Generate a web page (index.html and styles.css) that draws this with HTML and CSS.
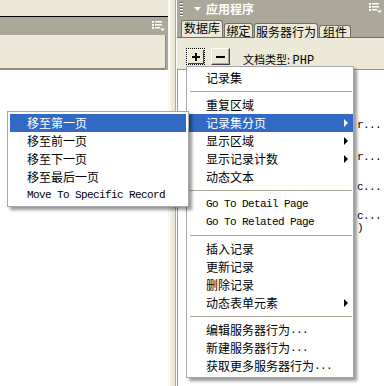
FILE: index.html
```html
<!DOCTYPE html>
<html lang="zh-CN">
<head>
    <meta charset="UTF-8">
    <meta name="viewport" content="width=device-width, initial-scale=1.0">
    <title>服务器行为</title>
    <link rel="stylesheet" href="styles.css">
</head>
<body>
    <div class="workspace">
        <section class="doc-panel">
            <div class="doc-top"></div>
            <div class="doc-head">
                <svg class="options-icon" width="13" height="10" viewBox="0 0 13 10">
                    <g fill="#fff">
                        <rect x="0" y="0" width="2" height="2"/><rect x="3" y="0" width="7" height="1.5"/>
                        <rect x="0" y="3" width="2" height="2"/><rect x="3" y="3" width="7" height="1.5"/>
                        <rect x="0" y="6" width="2" height="2"/><rect x="3" y="6" width="5" height="1.5"/>
                        <polygon points="8,7.5 13,7.5 10.5,10"/>
                    </g>
                </svg>
            </div>
            <div class="doc-bar"></div>
            <div class="doc-body"></div>
        </section>

        <div class="splitter"></div>

        <section class="app-panel">
            <header class="panel-head">
                <span class="gripper"></span>
                <svg class="collapse" width="7" height="4" viewBox="0 0 7 4"><polygon points="0,0 7,0 3.5,4" fill="#fff"/></svg>
                <span class="panel-title">应用程序</span>
                <svg class="options-icon" width="13" height="10" viewBox="0 0 13 10">
                    <g fill="#fff">
                        <rect x="0" y="0" width="2" height="2"/><rect x="3" y="0" width="7" height="1.5"/>
                        <rect x="0" y="3" width="2" height="2"/><rect x="3" y="3" width="7" height="1.5"/>
                        <rect x="0" y="6" width="2" height="2"/><rect x="3" y="6" width="5" height="1.5"/>
                        <polygon points="8,7.5 13,7.5 10.5,10"/>
                    </g>
                </svg>
            </header>

            <nav class="tabs">
                <span class="tab tab-db">数据库</span>
                <span class="tab tab-bind">绑定</span>
                <span class="tab tab-active">服务器行为</span>
                <span class="tab tab-comp">组件</span>
            </nav>

            <div class="toolbar">
                <button class="tool-btn focused">
                    <svg width="8" height="8" viewBox="0 0 8 8"><path d="M3 0h2v3h3v2H5v3H3V5H0V3h3z" fill="#000"/></svg>
                </button>
                <button class="tool-btn">
                    <svg width="9" height="2" viewBox="0 0 9 2"><rect width="9" height="2" fill="#000"/></svg>
                </button>
                <span class="doc-type">文档类型: <span class="doc-lang">PHP</span></span>
            </div>

            <div class="tree">
                <div class="frag">r...</div>
                <div class="frag gap-a">r...</div>
                <div class="frag gap-b">c...</div>
                <div class="frag gap-c">c...</div>
                <div class="frag">)</div>
            </div>
        </section>
    </div>

    <ul class="menu main-menu">
        <li class="item">记录集</li>
        <li class="sep"></li>
        <li class="item">重复区域</li>
        <li class="item active">记录集分页<span class="arrow"></span></li>
        <li class="item">显示区域<span class="arrow"></span></li>
        <li class="item">显示记录计数<span class="arrow"></span></li>
        <li class="item">动态文本</li>
        <li class="sep"></li>
        <li class="item mono">Go To Detail Page</li>
        <li class="item mono">Go To Related Page</li>
        <li class="sep"></li>
        <li class="item">插入记录</li>
        <li class="item">更新记录</li>
        <li class="item">删除记录</li>
        <li class="item">动态表单元素<span class="arrow"></span></li>
        <li class="sep"></li>
        <li class="item">编辑服务器行为<span class="mono">...</span></li>
        <li class="item">新建服务器行为<span class="mono">...</span></li>
        <li class="item">获取更多服务器行为<span class="mono">...</span></li>
    </ul>

    <ul class="menu sub-menu">
        <li class="item active">移至第一页</li>
        <li class="item">移至前一页</li>
        <li class="item">移至下一页</li>
        <li class="item">移至最后一页</li>
        <li class="item mono">Move To Specific Record</li>
    </ul>
</body>
</html>
```

FILE: styles.css
```css
* {
    box-sizing: border-box;
}

html, body {
    margin: 0;
    padding: 0;
    height: 100%;
}

body {
    font-family: "Noto Sans CJK SC", sans-serif;
    font-size: 12px;
    color: #000;
    background: #fff;
    overflow: hidden;
}

.mono {
    font-family: "Liberation Mono", monospace;
    font-size: 11px;
    letter-spacing: -0.6px;
}

.workspace {
    display: flex;
    height: 386px;
}

/* left document panel */
.doc-panel {
    width: 168px;
    display: flex;
    flex-direction: column;
    background: #aca899;
}

.doc-top {
    height: 17px;
    background: #ece9d8;
    border-bottom: 1px solid #000;
}

.doc-head {
    height: 18px;
    display: flex;
    align-items: center;
    justify-content: flex-end;
    padding-right: 3px;
}

.doc-bar {
    height: 35px;
    margin-right: 2px;
    background: #ece9d8;
    border-right: 1px solid #8e8c80;
    border-bottom: 2px solid #8e8c80;
    border-bottom-right-radius: 3px;
}

.doc-body {
    flex: 1;
    background: #fff;
}

.splitter {
    width: 9px;
    background: linear-gradient(to right, #f7f6f0 0 3px, #ece9d8 3px 7px, #aca899 7px 8px, #fff 8px);
}

/* application panel */
.app-panel {
    flex: 1;
    display: flex;
    flex-direction: column;
    background: #ece9d8;
}

.panel-head {
    height: 17px;
    display: flex;
    align-items: center;
    padding: 0 2px 0 3px;
    background: #aca899;
    color: #fff;
}

.gripper {
    width: 3px;
    height: 14px;
    background:
        repeating-linear-gradient(to bottom, #6f6d62 0 1px, transparent 1px 3px),
        repeating-linear-gradient(to bottom, transparent 0 1px, #fff 1px 2px, transparent 2px 3px);
}

.collapse {
    margin-left: 11px;
}

.panel-title {
    margin-left: 5px;
    font-weight: bold;
    line-height: 17px;
}

.panel-head .options-icon {
    margin-left: auto;
    margin-bottom: 2px;
}

.tabs {
    height: 21px;
    display: flex;
    align-items: flex-end;
    gap: 1px;
    padding-left: 4px;
    background: #aca899;
    border-bottom: 1px solid #716f64;
}

.tab {
    background: #ece9d8;
    border: 1px solid #716f64;
    border-bottom: none;
    border-radius: 3px 3px 0 0;
    text-align: center;
    white-space: nowrap;
}

.tab-db {
    width: 42px;
    height: 17px;
    line-height: 13px;
}

.tab-bind {
    width: 29px;
    height: 14px;
    line-height: 13px;
}

.tab-active {
    width: 64px;
    height: 15px;
    line-height: 15px;
    margin-bottom: -1px;
}

.tab-comp {
    width: 32px;
    height: 12px;
    line-height: 12px;
}

.toolbar {
    height: 31px;
    display: flex;
    align-items: flex-start;
    padding: 10px 0 0 9px;
}

.tool-btn {
    width: 19px;
    height: 17px;
    margin: 0 6px 0 0;
    padding: 0;
    display: flex;
    align-items: center;
    justify-content: center;
    background: #ece9d8;
    border: 1px solid;
    border-color: #fff #404040 #404040 #fff;
    box-shadow: inset -1px -1px 0 #aca899;
}

.tool-btn.focused {
    border: 1px dotted #000;
    box-shadow: inset 1px 1px 0 #fff, inset -1px -1px 0 #404040;
}

.doc-type {
    margin: 4px 0 0 7px;
    font-size: 11px;
    line-height: 14px;
}

.doc-lang {
    font-family: "Liberation Mono", monospace;
    font-size: 12px;
}

.tree {
    flex: 1;
    background: #fff;
    border-top: 1px solid #7f9db9;
    border-left: 1px solid #7f9db9;
    padding: 49px 0 0 179px;
    font-family: "Liberation Mono", monospace;
    font-size: 11px;
    letter-spacing: -0.6px;
}

.frag {
    line-height: 12px;
}

.gap-a {
    margin-top: 20px;
}

.gap-b {
    margin-top: 18px;
}

.gap-c {
    margin-top: 17px;
}

/* popup menus */
.menu {
    position: absolute;
    margin: 0;
    padding: 2px 0;
    list-style: none;
    background: #fff;
    border: 1px solid #a7a6aa;
    box-shadow: 3px 3px 3px rgba(0, 0, 0, 0.4);
}

.main-menu {
    left: 186px;
    top: 66px;
    width: 168px;
}

.sub-menu {
    left: 7px;
    top: 111px;
    width: 182px;
}

.item {
    height: 18px;
    line-height: 18px;
    margin-left: 2px;
    padding-left: 17px;
    display: flex;
    align-items: center;
    white-space: nowrap;
}

.sub-menu .item {
    margin-right: 2px;
}

.item.active {
    background: #316ac5;
    color: #fff;
}

.arrow {
    margin-left: auto;
    margin-right: 5px;
    width: 0;
    height: 0;
    border-left: 4px solid currentColor;
    border-top: 4px solid transparent;
    border-bottom: 4px solid transparent;
}

.sep {
    height: 1px;
    margin: 4px 1px 4px 3px;
    background: #aca899;
}
```
